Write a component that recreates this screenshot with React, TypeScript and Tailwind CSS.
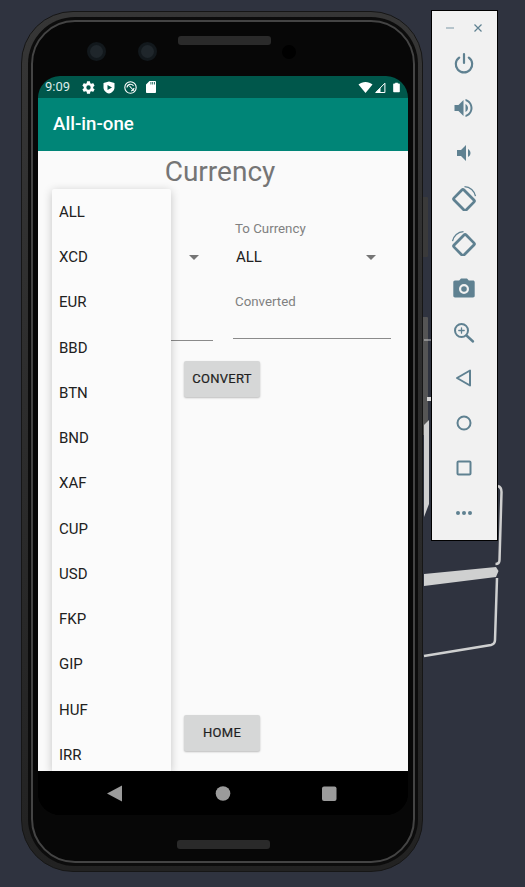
const CURRENCIES = ["ALL", "XCD", "EUR", "BBD", "BTN", "BND", "XAF", "CUP", "USD", "FKP", "GIP", "HUF", "IRR"];

const ic = "fill-[#5f8191]";

function Power() {
  return (
    <svg width="24" height="24" viewBox="0 0 24 24" fill="none" stroke="#5f8191" strokeWidth="2.2" strokeLinecap="round">
      <path d="M12 3v9" />
      <path d="M7.2 6.6a8.2 8.2 0 1 0 9.6 0" />
    </svg>
  );
}

function VolUp() {
  return (
    <svg width="24" height="24" viewBox="0 0 24 24" className={ic}>
      <path d="M2.5 9v6h4l5 5V4l-5 5h-4zM16 12c0-1.77-1.02-3.29-2.5-4.03v8.05c1.48-.73 2.5-2.25 2.5-4.02zM13.5 3v2.06c2.89.86 5 3.54 5 6.94s-2.11 6.08-5 6.94V21c4.01-.91 7-4.72 7-9s-2.99-8.09-7-9z" />
    </svg>
  );
}

function VolDown() {
  return (
    <svg width="24" height="24" viewBox="0 0 24 24" className={ic}>
      <path d="M18.5 12c0-1.77-1.02-3.29-2.5-4.03v8.05c1.48-.73 2.5-2.25 2.5-4.02zM5 9v6h4l5 5V4L9 9H5z" />
    </svg>
  );
}

function Rotate({ flip }: { flip?: boolean }) {
  return (
    <svg width="26" height="26" viewBox="0 0 26 26" fill="none" stroke="#5f8191" className={flip ? "-scale-x-100" : ""}>
      <rect x="6" y="6.5" width="14" height="17" rx="1.5" strokeWidth="2.8" transform="rotate(-45 13 15)" />
      <path d="M13.5 1.6a11.5 11.5 0 0 1 11 9.6" strokeWidth="1.3" />
    </svg>
  );
}

function Camera() {
  return (
    <svg width="24" height="24" viewBox="0 0 24 24" className={ic}>
      <path fillRule="evenodd" d="M9 2.5L7.2 4.5H3c-1 0-1.7.8-1.7 1.7v13.6c0 1 .8 1.7 1.7 1.7h18c1 0 1.7-.8 1.7-1.7V6.2c0-1-.8-1.7-1.7-1.7h-4.2L15 2.5H9zM12 8a5 5 0 1 1 0 10 5 5 0 0 1 0-10zm0 2.2a2.8 2.8 0 1 0 0 5.6 2.8 2.8 0 0 0 0-5.6z" />
    </svg>
  );
}

function Zoom() {
  return (
    <svg width="24" height="24" viewBox="0 0 24 24" fill="none" stroke="#5f8191" strokeLinecap="round">
      <circle cx="9.5" cy="9.5" r="6.5" strokeWidth="2" />
      <path d="M14.5 14.5l6.5 6" strokeWidth="2.4" />
      <path d="M9.5 6.8v5.4M6.8 9.5h5.4" strokeWidth="1.3" />
    </svg>
  );
}

function Back() {
  return (
    <svg width="24" height="24" viewBox="0 0 24 24" fill="none" stroke="#5f8191" strokeWidth="2" strokeLinejoin="round">
      <path d="M18 4.5v15L5 12z" />
    </svg>
  );
}

function Circle() {
  return (
    <svg width="24" height="24" viewBox="0 0 24 24" fill="none" stroke="#5f8191" strokeWidth="2">
      <circle cx="12" cy="12" r="6.5" />
    </svg>
  );
}

function Square() {
  return (
    <svg width="24" height="24" viewBox="0 0 24 24" fill="none" stroke="#5f8191" strokeWidth="2">
      <rect x="5.5" y="5.5" width="13" height="13" rx="1" />
    </svg>
  );
}

function More() {
  return (
    <svg width="24" height="24" viewBox="0 0 24 24" className={ic}>
      <circle cx="6" cy="12" r="2" />
      <circle cx="12" cy="12" r="2" />
      <circle cx="18" cy="12" r="2" />
    </svg>
  );
}

function SidePanel() {
  const icons = [
    <Power />, <VolUp />, <VolDown />, <Rotate />, <Rotate flip />, <Camera />,
    <Zoom />, <Back />, <Circle />, <Square />, <More />,
  ];
  return (
    <div className="absolute left-[431px] top-[10px] flex h-[531px] w-[67px] flex-col border border-black bg-[#f1f1f1]">
      <div className="flex h-[29px] shrink-0 items-end justify-between pb-[8px] pl-[14px] pr-[15px]">
        <svg width="8" height="8" viewBox="0 0 8 8" stroke="#8fa7b3" strokeWidth="1.2">
          <path d="M0 4h8" />
        </svg>
        <svg width="8" height="8" viewBox="0 0 8 8" stroke="#5f8191" strokeWidth="1.2">
          <path d="M.5.5l7 7M7.5.5l-7 7" />
        </svg>
      </div>
      {icons.map((icon, i) => (
        <div key={i} className="flex h-[45px] shrink-0 items-center justify-center pr-[1px]">
          {icon}
        </div>
      ))}
    </div>
  );
}

function StatusIcon({ children }: { children: React.ReactNode }) {
  return <div className="flex w-[21px] justify-center">{children}</div>;
}

function StatusBar() {
  return (
    <div className="flex h-[22px] shrink-0 items-center bg-[#00574b] pl-[7px] pr-[8px] text-[#dcebe8]">
      <span className="w-[32.5px] text-[13px]">9:09</span>
      <StatusIcon>
        <svg width="15" height="15" viewBox="0 0 24 24" fill="#fff">
          <path d="M19.4 13c.04-.32.1-.66.1-1s-.06-.68-.1-1l2.1-1.65c.2-.15.25-.42.12-.64l-2-3.46c-.12-.22-.4-.3-.6-.22l-2.5 1c-.52-.4-1.08-.73-1.7-.98l-.37-2.65A.5.5 0 0 0 14 2h-4a.5.5 0 0 0-.5.42l-.37 2.65c-.6.25-1.17.59-1.7.98l-2.5-1c-.22-.09-.48 0-.6.22l-2 3.46c-.13.22-.07.49.12.64L4.55 11c-.04.32-.07.65-.07 1s.03.68.07 1l-2.1 1.65c-.2.15-.25.42-.12.64l2 3.46c.12.22.4.3.6.22l2.5-1c.52.4 1.08.73 1.7.98l.37 2.65c.04.24.25.42.5.42h4c.25 0 .46-.18.5-.42l.37-2.65c.6-.25 1.17-.59 1.7-.98l2.5 1c.22.09.48 0 .6-.22l2-3.46c.13-.22.07-.49-.12-.64L19.4 13zM12 15.5a3.5 3.5 0 1 1 0-7 3.5 3.5 0 0 1 0 7z" />
        </svg>
      </StatusIcon>
      <StatusIcon>
        <svg width="12" height="13" viewBox="0 0 12 13">
          <path fillRule="evenodd" fill="#fff" d="M6 .5L11.5 2v4.5c0 3-2.3 5.3-5.5 6-3.2-.7-5.5-3-5.5-6V2zM4.5 4v5L9 6.5z" />
        </svg>
      </StatusIcon>
      <StatusIcon>
        <svg width="13" height="13" viewBox="0 0 13 13" fill="none" stroke="#fff" strokeWidth="1.1">
          <circle cx="6.5" cy="6.5" r="5.7" />
          <path d="M3 6.5a3.5 3.5 0 0 1 6.5-1.5M10 7a3.5 3.5 0 0 1-3 3M5.5 5l4.5 5" />
        </svg>
      </StatusIcon>
      <StatusIcon>
        <svg width="10" height="12" viewBox="0 0 10 12" fill="#fff">
          <path d="M3.5 0H9c.5 0 1 .4 1 1v10c0 .6-.5 1-1 1H1c-.5 0-1-.4-1-1V3.5zM4.5 1v2.5h.8V1zm1.8 0v2.5h.8V1zM8 1v2.5h.8V1z" />
        </svg>
      </StatusIcon>
      <div className="ml-auto flex items-center gap-[1px]">
        <svg width="15" height="11" viewBox="0 0 14 11" fill="#fff">
          <path d="M0 2.5C2 .9 4.4 0 7 0s5 .9 7 2.5L7 11z" />
        </svg>
        <svg width="12" height="11" viewBox="0 0 11 11" fill="none" stroke="#fff" strokeWidth="1">
          <path d="M10.4 1.2v9.3H1.2z" />
          <path d="M6 5.8v5H1.2z" fill="#fff" stroke="none" />
        </svg>
        <svg width="7" height="11" viewBox="0 0 8 11" fill="#fff" className="ml-[6px]">
          <path d="M2.5 0h3v1H7c.5 0 .8.4.8.8v8.4c0 .5-.3.8-.8.8H1c-.5 0-.8-.3-.8-.8V1.800c0-.4.3-.8.8-.8h1.500z" />
        </svg>
      </div>
    </div>
  );
}

function Arrow() {
  return <span className="h-0 w-0 border-x-[5px] border-t-[5px] border-x-transparent border-t-[#757575]" />;
}

function CurrencyForm() {
  return (
    <div className="grid grid-cols-2 items-start gap-x-[20px] px-[17px]">
      <div className="mt-[51px] flex h-[34px] items-center justify-end pr-[14px]">
        <Arrow />
      </div>
      <div className="pt-[28px]">
        <p className="pl-[2px] text-[13.3px] leading-[24px] text-[#808080]">To Currency</p>
        <div className="flex h-[33px] items-center justify-between pl-[3px] pr-[15px] text-[15px] text-[#212121]">
          <span>ALL</span>
          <Arrow />
        </div>
      </div>
      <div className="h-[67px] border-b border-[#8a8a8a]" />
      <div className="h-[65px] border-b border-[#8a8a8a] pt-[16px]">
        <p className="pl-[2px] text-[13.3px] leading-[24px] text-[#808080]">Converted</p>
      </div>
    </div>
  );
}

function AppButton({ label }: { label: string }) {
  return (
    <div className="flex h-[36px] w-[76px] items-center justify-center rounded-[2px] bg-[#d6d7d7] text-[13px] font-normal tracking-[0.3px] text-[#1f1f1f] [-webkit-text-stroke:0.2px_#1f1f1f] shadow-[0_1px_2px_rgba(0,0,0,0.25)]">
      {label}
    </div>
  );
}

function Screen() {
  return (
    <div className="flex h-[739px] w-[370px] flex-col overflow-hidden rounded-[22px] bg-black">
      <StatusBar />
      <div className="flex h-[53px] shrink-0 items-center bg-[#008577] pl-[15px] text-[18.7px] font-medium text-white">
        All-in-one
      </div>
      <div className="relative flex h-[620px] shrink-0 flex-col overflow-hidden bg-[#fafafa]">
        <h1 className="pr-[6px] pt-[3px] text-center text-[28px] leading-[35px] text-[#757575]">Currency</h1>
        <CurrencyForm />
        <div className="mt-[20px] pl-[146px]">
          <AppButton label="CONVERT" />
        </div>
        <div className="mt-auto pb-[20px] pl-[146px]">
          <AppButton label="HOME" />
        </div>
        <ul className="absolute bottom-0 left-[14px] top-[38px] w-[119px] overflow-hidden rounded-t-[2px] bg-[#fbfbfb] pt-[0.5px] shadow-[0_2px_10px_rgba(0,0,0,0.22)]">
          {CURRENCIES.map((c) => (
            <li key={c} className="flex h-[45.25px] items-center pl-[7px] text-[15px] text-[#212121]">
              {c}
            </li>
          ))}
        </ul>
      </div>
      <div className="flex h-[44px] shrink-0 items-center bg-black">
        <svg width="370" height="44" viewBox="0 0 370 44" fill="#9b9b9b">
          <path d="M84 14.500v16L69 22.500z" />
          <circle cx="185" cy="22.5" r="7.3" />
          <rect x="284" y="15.5" width="14.500" height="14.500" rx="2" />
        </svg>
      </div>
    </div>
  );
}

function Phone() {
  return (
    <div className="absolute left-[21px] top-[11px] h-[861px] w-[402px] rounded-[52px] border border-[#161616] bg-[linear-gradient(180deg,#363636,#222222)] py-[5px] pl-[6px] pr-[4px]">
      <div className="h-full rounded-[47px] bg-[#0c0c0c] p-[3px]">
        <div className="flex h-full flex-col items-center rounded-[44px] border-2 border-[#444444] bg-[#070707]">
          <div className="flex h-[54px] w-full shrink-0 pl-[54px] pt-[19px]">
            <span className="mt-[1px] h-[19px] w-[19px] rounded-full border-[3px] border-[#12181c] bg-[#1f262b]" />
            <span className="ml-[32px] mt-[1px] h-[19px] w-[19px] rounded-full border-[3px] border-[#12181c] bg-[#1f262b]" />
            <span className="ml-[21px] mt-[-5px] h-[9px] w-[93px] rounded-[3px] bg-[#2a2a2a]" />
            <span className="ml-[11px] mt-[4px] h-[14px] w-[14px] rounded-full bg-black" />
          </div>
          <Screen />
          <span className="mt-[25px] h-[9px] w-[93px] rounded-[3px] bg-[#2a2a2a]" />
        </div>
      </div>
    </div>
  );
}

// the skin behind the emulator, mostly covered by the tool panel
function Backdrop() {
  return (
    <svg className="absolute left-0 top-0" width="525" height="887" viewBox="0 0 525 887" fill="none">
      <rect x="422" y="197" width="6" height="60" rx="1" fill="#3a3a3a" />
      <rect x="422" y="317" width="6" height="118" rx="1" fill="#555" />
      <path d="M424 340h8" stroke="#c8c8c8" />
      <path d="M427 399h5" stroke="#d5d5d5" strokeWidth="4" />
      <path d="M424 425l5-5v84l-5 13z" fill="#cfcfcf" />
      <path d="M498 486c3 1 3.5 3 3.5 6l-2 68c0 3-2 4-4 4" stroke="#cfcfcf" strokeWidth="2.5" />
      <path d="M424 574l72-7 2.5 4-2.5 6-72 9z" fill="#cfd0d0" />
      <path d="M497 578l-2 62c0 3-2 4.5-4 5l-67 11" stroke="#cfd0d0" strokeWidth="2.5" />
    </svg>
  );
}

export default function App() {
  return (
    <div className="relative h-[887px] w-[525px] overflow-hidden bg-[#2f333f] font-['Roboto',sans-serif]">
      <Backdrop />
      <Phone />
      <SidePanel />
    </div>
  );
}
